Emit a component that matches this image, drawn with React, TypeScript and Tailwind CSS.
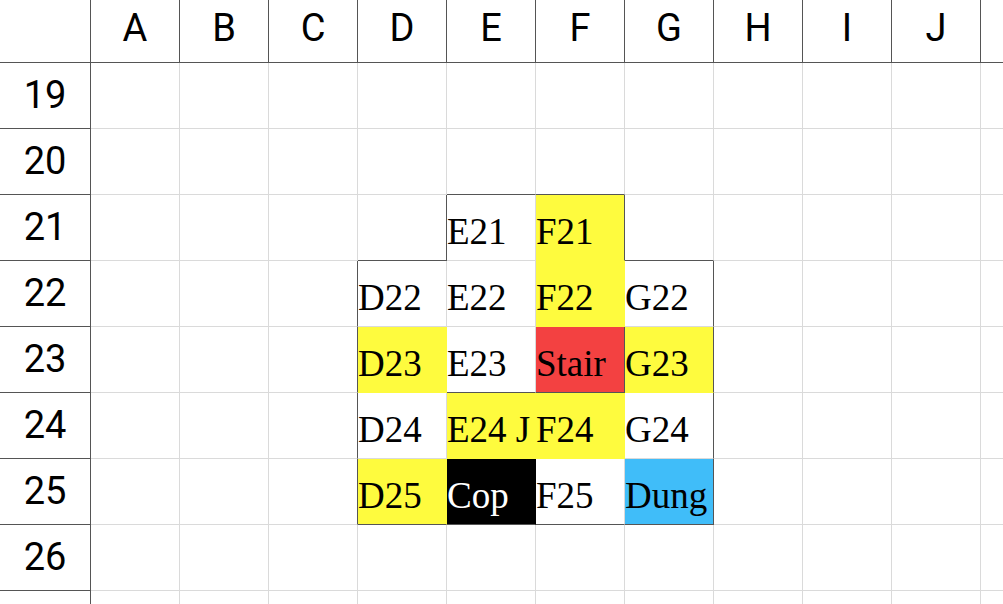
const COLS = ["A", "B", "C", "D", "E", "F", "G", "H", "I", "J", "K"]
const ROWS = [19, 20, 21, 22, 23, 24, 25, 26, 27]
// the last column and row are only partly on screen, their labels are off-canvas
const HIDDEN_LABELS = new Set<string | number>(["K", 27])

type Fill = "white" | "yellow" | "red" | "black" | "blue"

const FILLS: Record<Fill, { bg: string; r: string; b: string; text: string }> = {
  white: { bg: "bg-white", r: "border-r-[#dadada]", b: "border-b-[#dadada]", text: "text-black" },
  yellow: { bg: "bg-[#fefb3e]", r: "border-r-[#fefb3e]", b: "border-b-[#fefb3e]", text: "text-black" },
  red: { bg: "bg-[#f34141]", r: "border-r-[#f34141]", b: "border-b-[#f34141]", text: "text-black" },
  black: { bg: "bg-black", r: "border-r-black", b: "border-b-black", text: "text-white" },
  blue: { bg: "bg-[#40bdf9]", r: "border-r-[#40bdf9]", b: "border-b-[#40bdf9]", text: "text-black" },
}

type Cell = { text?: string; fill?: Fill }

// spreadsheet contents, keyed by "E21" etc.
const cells: Record<string, Cell> = {
  E21: { text: "E21" },
  F21: { text: "F21", fill: "yellow" },
  D22: { text: "D22" },
  E22: { text: "E22" },
  F22: { text: "F22", fill: "yellow" },
  G22: { text: "G22" },
  D23: { text: "D23", fill: "yellow" },
  E23: { text: "E23" },
  F23: { text: "Stair", fill: "red" },
  G23: { text: "G23", fill: "yellow" },
  D24: { text: "D24" },
  E24: { text: "E24 J", fill: "yellow" },
  F24: { text: "F24", fill: "yellow" },
  G24: { text: "G24" },
  D25: { text: "D25", fill: "yellow" },
  E25: { text: "Cop", fill: "black" },
  F25: { text: "F25" },
  G25: { text: "Dung", fill: "blue" },
}

// cells whose right / bottom edge is drawn as a dark border
const darkRight = new Set(["D21", "F21", "C22", "G22", "C23", "F23", "G23", "C24", "G24", "C25", "G25"])
const darkBottom = new Set(["E20", "F20", "D21", "G21", "E23", "F23", "D25", "E25", "F25", "G25"])

function GridCell({ id }: { id: string }) {
  const cell = cells[id]
  const fill = FILLS[cell?.fill ?? "white"]
  const right = darkRight.has(id) ? "border-r-[#555]" : fill.r
  const bottom = darkBottom.has(id) ? "border-b-[#555]" : fill.b

  return (
    <div
      className={`flex h-[66px] w-[89px] shrink-0 items-start overflow-hidden border-r border-b pt-[16px] ${fill.bg} ${right} ${bottom}`}
    >
      {cell?.text ? (
        <span
          className={`whitespace-nowrap text-[37px] leading-[41px] ${fill.text}`}
          style={{ fontFamily: '"Liberation Serif", serif' }}
        >
          {cell.text}
        </span>
      ) : null}
    </div>
  )
}

export default function App() {
  return (
    <div
      className="h-[604px] w-[1003px] overflow-hidden bg-white text-black"
      style={{ fontFamily: "Roboto, sans-serif" }}
    >
      <div className="flex">
        <div className="h-[63px] w-[91px] shrink-0 border-r border-b border-[#555]" />
        {COLS.map((col) => (
          <div
            key={col}
            className="flex h-[63px] w-[89px] shrink-0 items-center justify-center border-r border-b border-[#555] pb-[5px] text-[38px]"
          >
            {HIDDEN_LABELS.has(col) ? null : col}
          </div>
        ))}
      </div>

      {ROWS.map((row) => (
        <div key={row} className="flex">
          <div className="flex h-[66px] w-[91px] shrink-0 items-center justify-center border-r border-b border-[#555] text-[38px]">
            {HIDDEN_LABELS.has(row) ? null : row}
          </div>
          {COLS.map((col) => (
            <GridCell key={col} id={`${col}${row}`} />
          ))}
        </div>
      ))}
    </div>
  )
}
